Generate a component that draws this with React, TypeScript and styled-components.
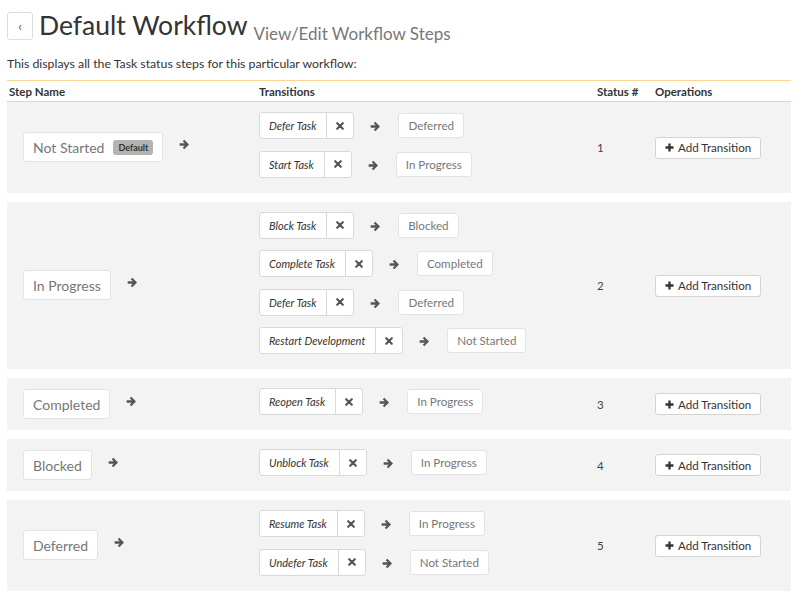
import React from "react";
import styled, { createGlobalStyle } from "styled-components";

const Global = createGlobalStyle`
  html, body { margin: 0; padding: 0; background: #fff; }
  body { font-family: Lato, "Open Sans", sans-serif; color: #333; }
  * { box-sizing: border-box; }
`;

const Page = styled.div`
  width: 803px;
  padding: 12px 12px 0 7px;
`;

const TitleBar = styled.div`
  display: flex;
  align-items: flex-end;
  height: 29px;
`;

const BackButton = styled.button`
  width: 26px;
  height: 28px;
  border: 1px solid #ddd;
  border-radius: 3px;
  background: #fff;
  color: #555;
  font-family: Lato, sans-serif;
  font-size: 13px;
  padding: 0;
  display: flex;
  align-items: center;
  justify-content: center;
  margin-right: 6px;
  align-self: flex-start;
`;

const Title = styled.h1`
  margin: 0;
  font-size: 26.5px;
  font-weight: 400;
  color: #333;
  line-height: 27px;
  position: relative;
  top: -2px;
`;

const Subtitle = styled.span`
  font-size: 17px;
  color: #777;
  margin-left: 6px;
  line-height: 17px;
  position: relative;
  top: 1px;
`;

const Intro = styled.p`
  margin: 14px 0 0 0;
  font-size: 12.3px;
  line-height: 17px;
  color: #333;
`;

const Table = styled.div`
  width: 784px;
  margin-top: 8px;
`;

const HeaderRow = styled.div`
  display: grid;
  grid-template-columns: 250px 338px 58px 1fr;
  border-top: 1px solid #fcd38f;
  border-bottom: 1px solid #fcd38f;
  height: 22px;
  align-items: center;
`;

const HeadCell = styled.div`
  font-size: 11.5px;
  font-weight: 700;
  color: #333;
  padding-left: 2px;
`;

const Row = styled.div`
  display: grid;
  grid-template-columns: 250px 338px 58px 1fr;
  background: #f3f3f3;
  align-items: center;
  margin-bottom: 9px;
`;

const StepCell = styled.div`
  display: flex;
  align-items: center;
  padding-left: 16px;
`;

const StepBox = styled.div`
  height: 30px;
  display: flex;
  align-items: center;
  gap: 9px;
  padding: 0 9px;
  background: #fff;
  border: 1px solid #e3e3e3;
  border-radius: 3px;
  font-size: 14px;
  color: #777;
`;

const Badge = styled.span`
  background: #b3b3b3;
  color: #333;
  font-size: 9px;
  font-weight: 700;
  border-radius: 3px;
  padding: 2px 5px;
  line-height: 11px;
`;

const StepArrow = styled.span`
  display: inline-flex;
  margin-left: 16px;
  margin-bottom: 6px;
`;

const TransitionList = styled.div`
  display: flex;
  flex-direction: column;
  gap: 11.5px;
  padding: 10px 0 15px 2px;
`;

const TransitionLine = styled.div`
  display: flex;
  align-items: center;
`;

const Pill = styled.div`
  display: flex;
  height: 27px;
  background: #fff;
  border: 1px solid #d9d9d9;
  border-radius: 3px;
`;

const PillLabel = styled.span`
  display: flex;
  align-items: center;
  padding: 0 10px 0 9px;
  font-size: 11px;
  font-style: italic;
  color: #333;
  border-right: 1px solid #d9d9d9;
`;

const PillRemove = styled.span`
  width: 26px;
  display: flex;
  align-items: center;
  justify-content: center;
`;

const LineArrow = styled.span`
  display: inline-flex;
  margin: 2px 17px 0 16px;
`;

const Target = styled.div`
  height: 25px;
  display: flex;
  align-items: center;
  padding: 0 9px;
  background: #fff;
  border: 1px solid #e3e3e3;
  border-radius: 3px;
  font-size: 11.6px;
  color: #777;
`;

const StatusCell = styled.div`
  font-size: 11.5px;
  color: #444;
  padding-left: 2px;
`;

const OpsCell = styled.div`
  padding-left: 2px;
`;

const AddButton = styled.button`
  height: 22px;
  display: inline-flex;
  align-items: center;
  gap: 4px;
  padding: 0 9px 0 9px;
  background: #fff;
  border: 1px solid #d4d4d4;
  border-radius: 3px;
  font-family: Lato, sans-serif;
  font-size: 11.6px;
  color: #333;
`;

const Arrow = () => (
  <svg width="11" height="11" viewBox="0 0 10 10">
    <path d="M0.6 3.9 H5.2 L3.4 2.1 L4.8 0.7 L9.1 5 L4.8 9.3 L3.4 7.9 L5.2 6.1 H0.6 Z" fill="#555" />
  </svg>
);

const Times = () => (
  <svg width="8" height="8" viewBox="0 0 8 8">
    <path d="M1.2 1.2 L6.8 6.8 M6.8 1.2 L1.2 6.8" stroke="#555" strokeWidth="2.1" strokeLinecap="round" />
  </svg>
);

const Plus = () => (
  <svg width="9" height="9" viewBox="0 0 9 9">
    <path d="M4.5 0.5 V8.5 M0.5 4.5 H8.5" stroke="#333" strokeWidth="2.3" />
  </svg>
);

type Step = {
  name: string;
  isDefault?: boolean;
  status: number;
  transitions: { action: string; to: string }[];
};

const steps: Step[] = [
  {
    name: "Not Started",
    isDefault: true,
    status: 1,
    transitions: [
      { action: "Defer Task", to: "Deferred" },
      { action: "Start Task", to: "In Progress" },
    ],
  },
  {
    name: "In Progress",
    status: 2,
    transitions: [
      { action: "Block Task", to: "Blocked" },
      { action: "Complete Task", to: "Completed" },
      { action: "Defer Task", to: "Deferred" },
      { action: "Restart Development", to: "Not Started" },
    ],
  },
  {
    name: "Completed",
    status: 3,
    transitions: [{ action: "Reopen Task", to: "In Progress" }],
  },
  {
    name: "Blocked",
    status: 4,
    transitions: [{ action: "Unblock Task", to: "In Progress" }],
  },
  {
    name: "Deferred",
    status: 5,
    transitions: [
      { action: "Resume Task", to: "In Progress" },
      { action: "Undefer Task", to: "Not Started" },
    ],
  },
];

export default function App() {
  return (
    <Page>
      <Global />
      <TitleBar>
        <BackButton>‹</BackButton>
        <Title>Default Workflow</Title>
        <Subtitle>View/Edit Workflow Steps</Subtitle>
      </TitleBar>
      <Intro>This displays all the Task status steps for this particular workflow:</Intro>
      <Table>
        <HeaderRow>
          <HeadCell>Step Name</HeadCell>
          <HeadCell>Transitions</HeadCell>
          <HeadCell>Status #</HeadCell>
          <HeadCell>Operations</HeadCell>
        </HeaderRow>
        {steps.map((s) => (
          <Row key={s.name}>
            <StepCell>
              <StepBox>
                {s.name}
                {s.isDefault && <Badge>Default</Badge>}
              </StepBox>
              <StepArrow>
                <Arrow />
              </StepArrow>
            </StepCell>
            <TransitionList>
              {s.transitions.map((t) => (
                <TransitionLine key={t.action}>
                  <Pill>
                    <PillLabel>{t.action}</PillLabel>
                    <PillRemove>
                      <Times />
                    </PillRemove>
                  </Pill>
                  <LineArrow>
                    <Arrow />
                  </LineArrow>
                  <Target>{t.to}</Target>
                </TransitionLine>
              ))}
            </TransitionList>
            <StatusCell>{s.status}</StatusCell>
            <OpsCell>
              <AddButton>
                <Plus />
                Add Transition
              </AddButton>
            </OpsCell>
          </Row>
        ))}
      </Table>
    </Page>
  );
}
